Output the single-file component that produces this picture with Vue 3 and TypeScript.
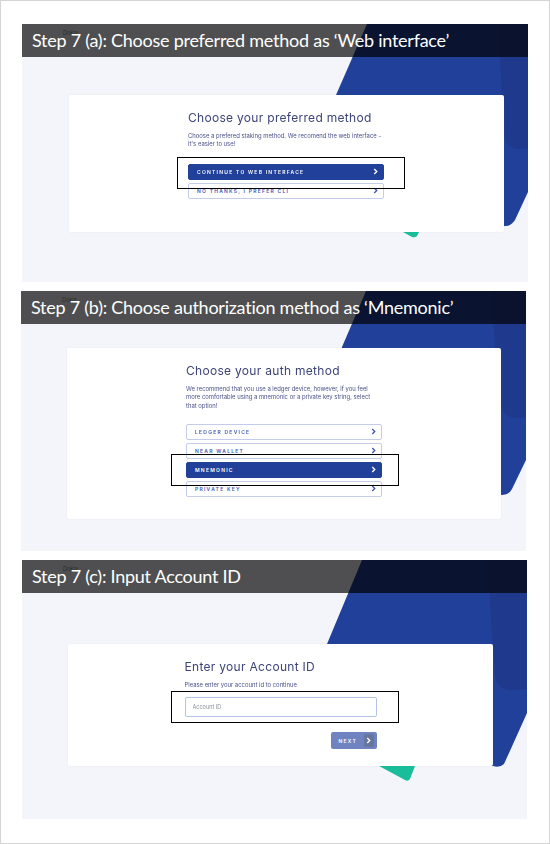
<script setup lang="ts">
interface Btn {
  label: string;
  active?: boolean;
}

const authButtons: Btn[] = [
  { label: 'LEDGER DEVICE' },
  { label: 'NEAR WALLET' },
  { label: 'MNEMONIC', active: true },
  { label: 'PRIVATE KEY' }
];
const methodButtons: Btn[] = [
  { label: 'CONTINUE TO WEB INTERFACE', active: true },
  { label: 'NO THANKS, I PREFER CLI' }
];
</script>

<template>
  <div class="page">
    <!-- step a -->
    <section class="panel panel-a">
      <svg class="shapes" width="506" height="258" viewBox="0 0 506 258">
        <path d="M345 0 L314 71 L314 202 L484 202 Q489 202 493 196 L506 168 L506 0 Z" fill="#21409a" />
        <path d="M476 0 L482 108 Q483 125 498 125 L506 124 L506 0 Z" fill="#1f3a8c" />
        <path d="M381 208 L397 208 L395 212 Q393 214 390 213 Z" fill="#19bd99" />
      </svg>
      <h2 class="bar"><span class="ghost">Dokia</span><span class="title">Step 7 (a): Choose preferred method as ‘Web interface’</span></h2>
      <div class="card">
        <h3>Choose your preferred method</h3>
        <p>Choose a prefered staking method. We recomend the web interface -<br />it's easier to use!</p>
        <div class="btns">
          <div v-for="b in methodButtons" :key="b.label" class="btn" :class="{ active: b.active }">
            <span>{{ b.label }}</span>
            <svg width="5" height="7" viewBox="0 0 6 8"><path d="M1.5 1 L4.5 4 L1.5 7" fill="none" stroke="currentColor" stroke-width="1.6" /></svg>
          </div>
        </div>
      </div>
      <div class="mark"></div>
    </section>

    <!-- step b -->
    <section class="panel panel-b">
      <svg class="shapes" width="505" height="260" viewBox="0 0 505 260">
        <path d="M345 0 L321 56 L321 204 L480 204 Q488 204 491 198 L505 169 L505 0 Z" fill="#21409a" />
        <path d="M470 0 L478 105 Q480 127 495 127 L505 127 L505 0 Z" fill="#1f3a8c" />
      </svg>
      <h2 class="bar"><span class="ghost">Dokia</span><span class="title">Step 7 (b): Choose authorization method as ‘Mnemonic’</span></h2>
      <div class="card">
        <h3>Choose your auth method</h3>
        <p>We recommend that you use a ledger device, however, if you feel<br />more comfortable using a mnemonic or a private key string, select<br />that option!</p>
        <div class="btns">
          <div v-for="b in authButtons" :key="b.label" class="btn" :class="{ active: b.active }">
            <span>{{ b.label }}</span>
            <svg width="5" height="7" viewBox="0 0 6 8"><path d="M1.5 1 L4.5 4 L1.5 7" fill="none" stroke="currentColor" stroke-width="1.6" /></svg>
          </div>
        </div>
      </div>
      <div class="mark"></div>
    </section>

    <!-- step c -->
    <section class="panel panel-c">
      <svg class="shapes" width="505" height="259" viewBox="0 0 505 259">
        <path d="M340 0 L305 84 L305 206 L471 206 Q478 208 482 204 L505 153 L505 0 Z" fill="#21409a" />
        <path d="M465 0 L473 115 Q475 130 490 130 L505 129 L505 0 Z" fill="#1f3a8c" />
        <path d="M357 206 L393 206 L388 219 Q386 222 383 220 Z" fill="#19bd99" />
      </svg>
      <h2 class="bar"><span class="ghost">Dokia</span><span class="title">Step 7 (c): Input Account ID</span></h2>
      <div class="card">
        <h3>Enter your Account ID</h3>
        <p>Please enter your account id to continue</p>
        <input class="field" type="text" placeholder="Account ID" />
        <div class="next-row">
          <div class="next">
            <span>NEXT</span>
            <i><svg width="5" height="7" viewBox="0 0 6 8"><path d="M1.5 1 L4.5 4 L1.5 7" fill="none" stroke="currentColor" stroke-width="1.6" /></svg></i>
          </div>
        </div>
      </div>
      <div class="mark"></div>
    </section>
  </div>
</template>

<style>
html,
body {
  margin: 0;
  background: #fff;
}
</style>

<style scoped>
.page {
  box-sizing: border-box;
  width: 550px;
  height: 844px;
  border: 1px solid #d4d4d4;
  padding-top: 23px;
  overflow: hidden;
  font-family: Inter, "Open Sans", sans-serif;
}

.panel {
  position: relative;
  background: #f4f5fa;
  overflow: hidden;
}

.panel-a {
  width: 506px;
  height: 258px;
  margin-left: 21px;
}

.panel-b {
  width: 505px;
  height: 260px;
  margin: 9px 0 0 20px;
}

.panel-c {
  width: 505px;
  height: 259px;
  margin: 9px 0 0 21px;
}

.shapes {
  position: absolute;
  left: 0;
  top: 0;
}

.bar {
  position: relative;
  z-index: 2;
  margin: 0;
  height: 33px;
  box-sizing: border-box;
  padding-left: 10px;
  background: rgba(0, 0, 0, 0.68);
  color: #fff;
  font-family: Lato, "Noto Sans", sans-serif;
  font-size: 18px;
  font-weight: 400;
  letter-spacing: -0.25px;
  line-height: 32px;
  white-space: nowrap;
}

.title {
  position: relative;
}

.ghost {
  position: absolute;
  left: 41px;
  top: 5px;
  color: #2c2c2c;
  font-family: Inter, sans-serif;
  font-size: 5.5px;
  letter-spacing: 0;
  line-height: 8px;
}

.card {
  position: relative;
  z-index: 1;
  box-sizing: border-box;
  background: #fff;
  border-radius: 2px;
  box-shadow: 0 0 2px rgba(120, 130, 170, 0.12);
  color: #3d4478;
  filter: blur(0.3px);
}

.panel-a .card {
  width: 435px;
  height: 137px;
  margin: 38px 0 0 47px;
  padding: 16px 0 0 119px;
}

.panel-b .card {
  width: 434px;
  height: 171px;
  margin: 24px 0 0 46px;
  padding: 16px 0 0 119px;
}

.panel-c .card {
  width: 425px;
  height: 122px;
  margin: 51px 0 0 46px;
  padding: 16px 0 0 116.5px;
}

h3 {
  margin: 0;
  font-size: 12px;
  font-weight: 400;
  line-height: 14px;
  letter-spacing: 0.3px;
}

p {
  margin: 6.5px 0 0;
  font-size: 5.9px;
  line-height: 8.5px;
  color: #4a5088;
}

.btns {
  display: flex;
  flex-direction: column;
  gap: 3px;
  width: 196px;
  margin-top: 15px;
}

.panel-b .btns {
  margin-top: 13.5px;
}

.btn {
  box-sizing: border-box;
  height: 16px;
  display: flex;
  align-items: center;
  justify-content: space-between;
  padding: 0 5px 0 8px;
  border: 1.5px solid #c3cdea;
  border-radius: 2px;
  background: #fff;
  color: #3f58ae;
  font-size: 5px;
  font-weight: 600;
  letter-spacing: 1.25px;
}

.btn.active {
  background: #21409a;
  border-color: #21409a;
  color: #fff;
}

.field {
  display: block;
  box-sizing: border-box;
  width: 192px;
  height: 20px;
  margin-top: 8px;
  padding: 0 7px;
  border: 1.5px solid #b5c3ea;
  border-radius: 2px;
  background: #fff;
  outline: none;
  font-family: inherit;
  font-size: 5.5px;
}

.field::placeholder {
  color: #8a8d99;
}

.next-row {
  display: flex;
  justify-content: flex-end;
  width: 192px;
  margin-top: 15px;
}

.next {
  box-sizing: border-box;
  width: 46px;
  height: 17px;
  display: flex;
  align-items: center;
  justify-content: space-between;
  padding: 0 3px 0 8px;
  border-radius: 2px;
  background: #6f83c1;
  color: #fff;
  font-size: 5px;
  font-weight: 600;
  letter-spacing: 1.25px;
}

.next i {
  display: flex;
  align-items: center;
  justify-content: center;
  width: 10px;
  height: 13px;
  border-radius: 2px;
  background: #67769f;
}

.mark {
  position: absolute;
  z-index: 3;
  box-sizing: border-box;
  border: 1px solid #000;
}

.panel-a .mark {
  left: 155px;
  top: 133px;
  width: 228px;
  height: 32px;
}

.panel-b .mark {
  left: 150px;
  top: 163px;
  width: 228px;
  height: 32px;
}

.panel-c .mark {
  left: 149px;
  top: 131px;
  width: 228px;
  height: 32px;
}
</style>
